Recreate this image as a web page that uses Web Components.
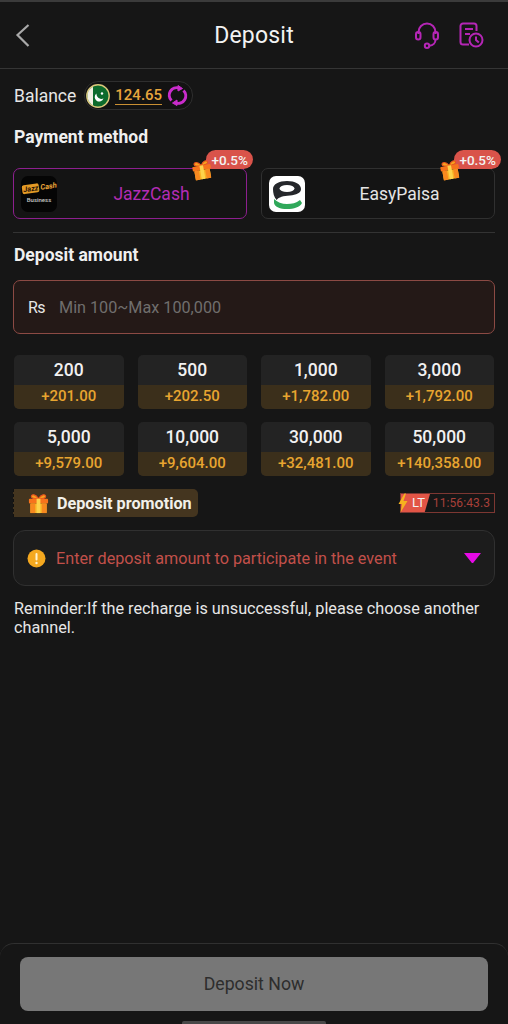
<!DOCTYPE html>
<html>
<head>
<meta charset="utf-8">
<title>Deposit</title>
<style>
  html, body { margin: 0; padding: 0; background: #161616; }
  body { width: 508px; height: 1024px; overflow: hidden; font-family: Roboto, "Liberation Sans", sans-serif; color: #e8e8e8; }
</style>
</head>
<body>
<deposit-page>
  <top-bar title="Deposit"></top-bar>
  <balance-row amount="124.65"></balance-row>
  <section-title style="margin-top:17px">Payment method</section-title>
  <div style="display:flex;gap:14px;padding:0 13px;margin-top:21px">
    <pay-card name="JazzCash" logo="jazz" selected></pay-card>
    <pay-card name="EasyPaisa" logo="easy"></pay-card>
  </div>
  <div style="height:1px;background:#333;margin:13px 13px 0"></div>
  <section-title style="margin-top:12px">Deposit amount</section-title>
  <amount-input placeholder="Min 100~Max 100,000"></amount-input>
  <div style="display:grid;grid-template-columns:repeat(4,109.5px);column-gap:14px;row-gap:13px;padding:0 13px 0 14px;margin-top:21px">
    <amount-tile value="200" bonus="+201.00"></amount-tile>
    <amount-tile value="500" bonus="+202.50"></amount-tile>
    <amount-tile value="1,000" bonus="+1,782.00"></amount-tile>
    <amount-tile value="3,000" bonus="+1,792.00"></amount-tile>
    <amount-tile value="5,000" bonus="+9,579.00"></amount-tile>
    <amount-tile value="10,000" bonus="+9,604.00"></amount-tile>
    <amount-tile value="30,000" bonus="+32,481.00"></amount-tile>
    <amount-tile value="50,000" bonus="+140,358.00"></amount-tile>
  </div>
  <promo-row time="11:56:43.3"></promo-row>
  <event-select>Enter deposit amount to participate in the event</event-select>
  <div style="padding:0 14px;margin-top:13px;font-size:16.25px;line-height:19px;color:#e6e6e6">Reminder:If the recharge is unsuccessful, please choose another channel.</div>
  <bottom-bar>Deposit Now</bottom-bar>
</deposit-page>

<script>
const GIFT = `
  <svg viewBox="0 0 24 24" width="100%" height="100%">
    <path d="M12 7C9 2 5 2 4.5 4.5 4.2 6.5 8 7.5 12 7ZM12 7c3-5 7-5 7.500-2.500C19.800 6.500 16 7.500 12 7Z" fill="#f6a11f" stroke="#e8541e" stroke-width="1.200"/>
    <rect x="2" y="7" width="20" height="5" rx="1" fill="#f7731c"/>
    <rect x="3.500" y="12" width="17" height="10" rx="1" fill="#f9b225"/>
    <rect x="3.500" y="12" width="5" height="10" fill="#f7891f"/>
    <rect x="15.500" y="12" width="5" height="10" fill="#f7891f"/>
    <rect x="10" y="7" width="4" height="15" fill="#fdd34b"/>
  </svg>`;

class DepositPage extends HTMLElement {
  constructor() {
    super();
    this.attachShadow({ mode: "open" });
    this.shadowRoot.innerHTML = `
      <style>
        :host { display: flex; flex-direction: column; width: 508px; height: 1024px; box-sizing: border-box; }
      </style>
      <slot></slot>
    `;
  }
}

class TopBar extends HTMLElement {
  constructor() {
    super();
    this.attachShadow({ mode: "open" });
    this.shadowRoot.innerHTML = `
      <style>
        :host { display: block; }
        .bar {
          display: flex; align-items: center; justify-content: space-between;
          height: 66px; padding: 0 24px 0 14px;
          border-top: 2px solid #3b3b3b; border-bottom: 1px solid #353535;
        }
        .title { position: absolute; left: 0; width: 508px; text-align: center; font-size: 23px; color: #f2f2f2; letter-spacing: .2px; }
        .icons { display: flex; gap: 20px; align-items: center; }
        svg { display: block; }
      </style>
      <div class="bar">
        <svg width="18" height="26" viewBox="0 0 18 26" fill="none" stroke="#a9a9a9" stroke-width="2.200"><path d="M14.500 3 3.500 13 14.500 24"/></svg>
        <div class="title">${this.getAttribute("title")}</div>
        <div class="icons">
          <svg width="24" height="27" viewBox="0 0 24 27" fill="none" stroke="#b526b6" stroke-width="2">
            <path d="M3.500 12V10a8.500 8.500 0 0 1 17 0v2"/>
            <rect x="1" y="10" width="4.500" height="7.500" rx="2.200"/>
            <rect x="18.500" y="10" width="4.500" height="7.500" rx="2.200"/>
            <path d="M20.500 17.500c0 3.500-2.500 6-6 6.300"/>
            <circle cx="12" cy="23.800" r="2.200"/>
          </svg>
          <svg width="25" height="26" viewBox="0 0 25 26" fill="none" stroke="#b526b6" stroke-width="2">
            <path d="M10 22.500H4a2.500 2.500 0 0 1-2.500-2.500V4A2.500 2.500 0 0 1 4 1.500h11A2.500 2.500 0 0 1 17.500 4v5"/>
            <path d="M6 7h8M6 12h5"/>
            <circle cx="17" cy="18" r="6.500"/>
            <path d="M17 14.500V18l2.800 2.500"/>
          </svg>
        </div>
      </div>
    `;
  }
}

class BalanceRow extends HTMLElement {
  constructor() {
    super();
    this.attachShadow({ mode: "open" });
    this.shadowRoot.innerHTML = `
      <style>
        :host { display: flex; align-items: center; gap: 8px; padding: 0 14px; margin-top: 12px; font-size: 17.500px; color: #e6e6e6; }
        .pill {
          display: flex; align-items: center; height: 27px; padding: 0 4px 0 1px; gap: 5px;
          border: 1px solid #2e2e2e; border-radius: 14px; background: #121212;
        }
        .amount { color: #e8a63d; font-size: 15px; font-weight: 500; border-bottom: 1.500px solid #c98f33; line-height: 18px; }
        svg { display: block; }
      </style>
      <span>Balance</span>
      <div class="pill">
        <svg width="24" height="24" viewBox="0 0 24 24">
          <circle cx="12" cy="12" r="11.200" fill="#0d6b2c" stroke="#d9c67a" stroke-width="1.400"/>
          <path d="M1.500 12A10.500 10.500 0 0 1 7 2.800V21.200A10.500 10.500 0 0 1 1.500 12Z" fill="#f1efe2"/>
          <path d="M17.500 14.500a5 5 0 0 1-7-5 4.500 4.500 0 1 0 7 5Z" fill="#fff"/>
          <circle cx="16" cy="9.500" r="1.200" fill="#fff"/>
        </svg>
        <span class="amount">${this.getAttribute("amount")}</span>
        <svg width="21" height="21" viewBox="0 0 21 21" fill="none" stroke="#c92ccb" stroke-width="3">
          <path d="M4.500 15.500A7.500 7.500 0 0 1 12 3"/>
          <path d="M16.500 5.500A7.500 7.500 0 0 1 9 18"/>
          <path d="M11 .5l4.500 3-4.500 2.500Z" fill="#c92ccb" stroke-width="1"/>
          <path d="M10 15l-4.500 3 4.500 2.500Z" fill="#c92ccb" stroke-width="1"/>
        </svg>
      </div>
    `;
  }
}

class SectionTitle extends HTMLElement {
  constructor() {
    super();
    this.attachShadow({ mode: "open" });
    this.shadowRoot.innerHTML = `
      <style>
        :host { display: block; padding: 0 14px; font-size: 17.500px; font-weight: 700; line-height: 20px; color: #f0f0f0; }
      </style>
      <slot></slot>
    `;
  }
}

class PayCard extends HTMLElement {
  constructor() {
    super();
    this.attachShadow({ mode: "open" });
    const logos = {
      jazz: `<div class="logo" style="background:#050505;flex-direction:column">
               <div style="display:flex;align-items:center;transform:rotate(-8deg);font:italic 700 7.500px/9px Roboto,sans-serif;white-space:nowrap">
                 <span style="background:#e39a25;color:#2a1405;border-radius:2px;padding:0 1px">Jazz</span>
                 <span style="color:#eaa63a;margin-left:1px">Cash</span>
               </div>
               <span style="font:500 6px/8px Roboto,sans-serif;color:#c9c9c9;margin-top:4px">Business</span>
             </div>`,
      easy: `<div class="logo" style="background:#fff">
               <svg width="36" height="36" viewBox="0 0 36 36" fill="none">
                 <path d="M5 23c3 3 8 5 13 5 5 0 9-1 13-4l2 3c-2 4-8 6-15 6S6 31 5 27Z" fill="#2fa85a"/>
                 <path d="M4 13c0-5 6-8 14-8s14 3 14 8c0 4-5 6-11 6.500-7 .5-11 1.500-13.500 4.500C5 21 4 17 4 13Z" fill="#25272b"/>
                 <ellipse cx="18" cy="12.500" rx="7.500" ry="3.500" fill="#fff"/>
               </svg>
             </div>`,
    };
    const selected = this.hasAttribute("selected");
    this.shadowRoot.innerHTML = `
      <style>
        :host { display: block; flex: 0 0 234px; position: relative; }
        .card {
          display: flex; align-items: center; height: 51px; box-sizing: border-box; padding: 0 7px;
          border: 1px solid ${selected ? "#8d1f8f" : "#303030"}; border-radius: 7px; background: #141414;
        }
        .logo { display: flex; align-items: center; justify-content: center; width: 36px; height: 36px; border-radius: 7px; overflow: hidden; }
        .name { flex: 1; text-align: center; font-size: 17.500px; padding-left: 7px; color: ${selected ? "#b32cb4" : "#e4e4e4"}; }
        .badge {
          position: absolute; right: -6px; top: -18px; height: 19px; padding: 0 5px 0 5px;
          display: flex; align-items: center; background: #d9534a; color: #f3f3f3;
          font-size: 13.500px; font-weight: 500; border-radius: 10px 10px 10px 2px;
        }
        .gift { position: absolute; right: 34px; top: -9px; width: 22px; height: 22px; transform: rotate(-10deg); }
      </style>
      <div class="card">
        ${logos[this.getAttribute("logo")]}
        <div class="name">${this.getAttribute("name")}</div>
      </div>
      <div class="badge">+0.5%</div>
      <div class="gift">${GIFT}</div>
    `;
  }
}

class AmountInput extends HTMLElement {
  constructor() {
    super();
    this.attachShadow({ mode: "open" });
    this.shadowRoot.innerHTML = `
      <style>
        :host {
          display: flex; align-items: center; height: 54px; box-sizing: border-box; margin: 15px 13px 0; padding: 0 14px;
          border: 1px solid #8c4a44; border-radius: 7px; background: #241917;
        }
        .cur { color: #e6e6e6; font-size: 16px; width: 31px; letter-spacing: -.6px; }
        .ph { color: #706e6d; font-size: 16.200px; }
      </style>
      <span class="cur">Rs</span>
      <span class="ph">${this.getAttribute("placeholder")}</span>
    `;
  }
}

class AmountTile extends HTMLElement {
  constructor() {
    super();
    this.attachShadow({ mode: "open" });
    this.shadowRoot.innerHTML = `
      <style>
        :host { display: block; height: 54px; border-radius: 5px; overflow: hidden; background: #232323; text-align: center; }
        .v { height: 30px; line-height: 30px; font-size: 17.500px; font-weight: 500; color: #f1f1f1; }
        .b { height: 24px; line-height: 23px; font-size: 15px; font-weight: 500; color: #e8a530; background: #3b2f1b; }
      </style>
      <div class="v">${this.getAttribute("value")}</div>
      <div class="b">${this.getAttribute("bonus")}</div>
    `;
  }
}

class PromoRow extends HTMLElement {
  constructor() {
    super();
    this.attachShadow({ mode: "open" });
    this.shadowRoot.innerHTML = `
      <style>
        :host { display: flex; align-items: center; justify-content: space-between; margin-top: 13px; padding: 0 13px; }
        .tag {
          display: flex; align-items: center; gap: 7px; height: 28px; width: 185px; box-sizing: border-box; padding-left: 13px;
          background: #44351f; border-radius: 0 5px 5px 0; font-size: 16.200px; font-weight: 700; color: #f2f0ea;
          border-left: 1px dashed #111;
        }
        .gift { width: 23px; height: 23px; }
        .timer { display: flex; align-items: stretch; position: relative; height: 20px; width: 95px; box-sizing: border-box; border: 1px solid #7d3732; }
        .lt {
          width: 29px; background: #e25546; color: #f3f3f3; font-size: 13px; line-height: 18px; padding-left: 11px; box-sizing: border-box;
          clip-path: polygon(0 0, 100% 0, 82% 100%, 0 100%);
        }
        .t { flex: 1; color: #a8403a; font-size: 12px; line-height: 18px; text-align: right; padding-right: 4px; letter-spacing: .1px; }
        .bolt { position: absolute; left: -3px; top: -1px; }
      </style>
      <div class="tag"><div class="gift">${GIFT}</div>Deposit promotion</div>
      <div class="timer">
        <div class="lt">LT</div>
        <div class="t">${this.getAttribute("time")}</div>
        <svg class="bolt" width="10" height="20" viewBox="0 0 10 19"><path d="M6.500 0 .5 10.500h3.500L2.500 19 9.500 7.500H5.500L8 0Z" fill="#f6b21f"/></svg>
      </div>
    `;
  }
}

class EventSelect extends HTMLElement {
  constructor() {
    super();
    this.attachShadow({ mode: "open" });
    this.shadowRoot.innerHTML = `
      <style>
        :host {
          display: flex; align-items: center; height: 56px; box-sizing: border-box; margin: 13px 13px 0; padding: 0 13px;
          border: 1px solid #303030; border-radius: 12px; background: #1c1c1c;
        }
        .text { flex: 1; margin-left: 10px; color: #c2504a; font-size: 16.200px; }
        svg { display: block; }
      </style>
      <svg width="19" height="19" viewBox="0 0 19 19">
        <circle cx="9.500" cy="9.500" r="9" fill="#f4a81f"/>
        <rect x="8.500" y="4" width="2" height="7.500" rx="1" fill="#fff3d0"/>
        <circle cx="9.500" cy="14" r="1.200" fill="#fff3d0"/>
      </svg>
      <div class="text"><slot></slot></div>
      <svg width="17" height="10" viewBox="0 0 17 10"><path d="M0 0H17L9.500 9.500a1.200 1.200 0 0 1-2 0Z" fill="#e60ae6"/></svg>
    `;
  }
}

class BottomBar extends HTMLElement {
  constructor() {
    super();
    this.attachShadow({ mode: "open" });
    this.shadowRoot.innerHTML = `
      <style>
        :host { display: block; margin-top: auto; height: 81px; position: relative; box-sizing: border-box; padding: 13px 20px 0; border-top: 1px solid #303030; border-radius: 14px 14px 0 0; background: #161616; }
        .btn {
          height: 54px; border-radius: 8px; background: #777; color: #2d2d2d; font-size: 17.700px;
          display: flex; align-items: center; justify-content: center;
        }
        .home { position: absolute; left: 182px; bottom: 0; width: 144px; height: 3px; background: #484848; border-radius: 2px 2px 0 0; }
      </style>
      <div class="btn"><slot></slot></div>
      <div class="home"></div>
    `;
  }
}

customElements.define("deposit-page", DepositPage);
customElements.define("top-bar", TopBar);
customElements.define("balance-row", BalanceRow);
customElements.define("section-title", SectionTitle);
customElements.define("pay-card", PayCard);
customElements.define("amount-input", AmountInput);
customElements.define("amount-tile", AmountTile);
customElements.define("promo-row", PromoRow);
customElements.define("event-select", EventSelect);
customElements.define("bottom-bar", BottomBar);
</script>
</body>
</html>
